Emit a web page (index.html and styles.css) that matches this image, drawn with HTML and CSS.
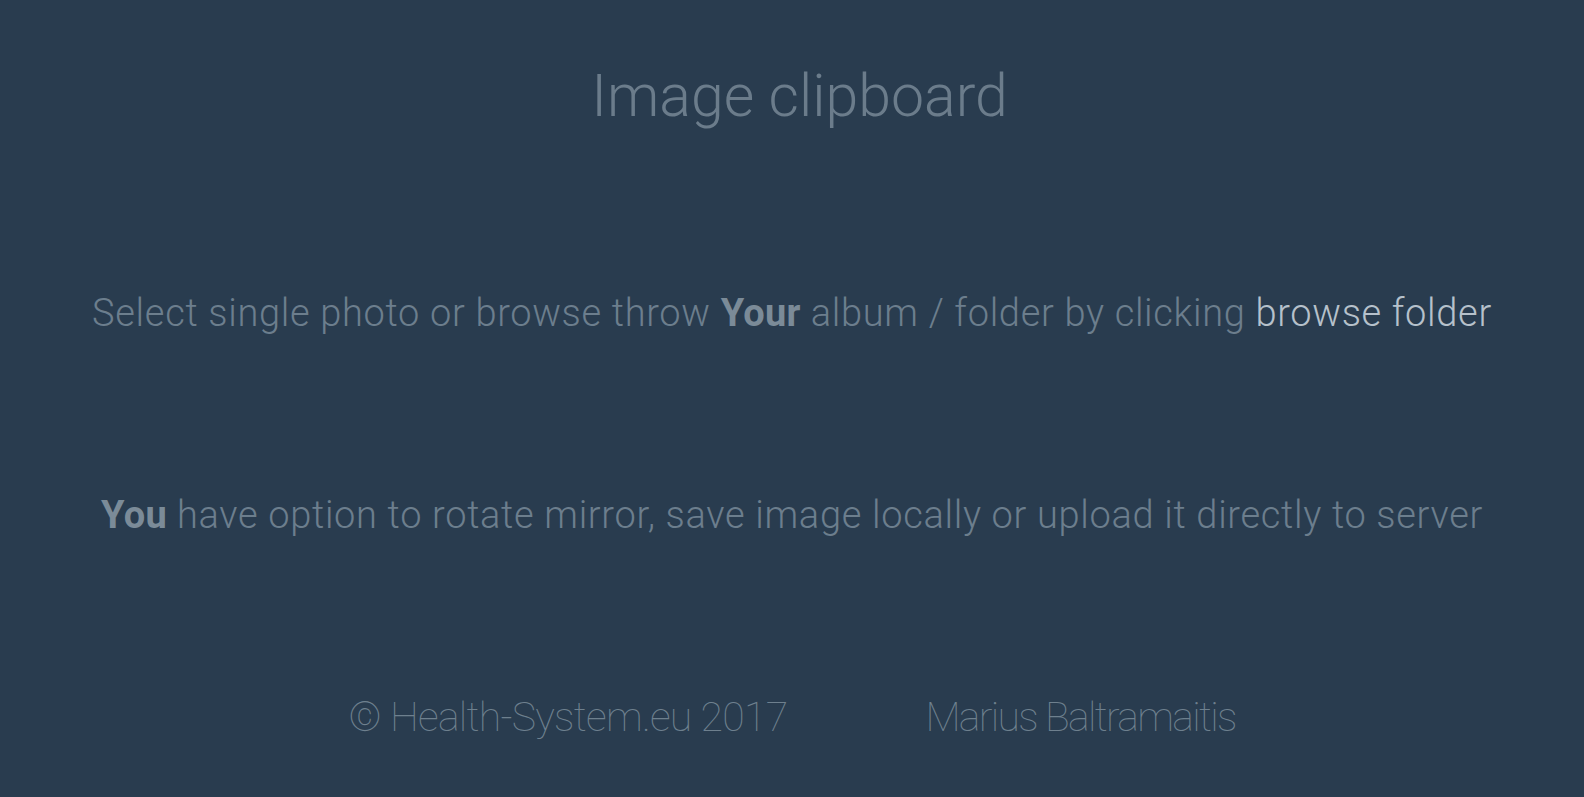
FILE: index.html
```html
<!DOCTYPE html>
<html lang="en">
<head>
<meta charset="utf-8">
<title>Image clipboard</title>
<link rel="stylesheet" href="styles.css">
</head>
<body>
<main class="page">
  <h1 class="title">Image clipboard</h1>
  <p class="line">Select single photo or browse throw <b class="strong">Your</b> album / folder by clicking <a class="link">browse folder</a></p>
  <p class="line"><b class="strong">You</b> have option to rotate mirror, save image locally or upload it directly to server</p>
  <footer class="footer">
    <span class="copy">© Health-System.eu 2017</span>
    <span class="author">Marius Baltramaitis</span>
  </footer>
</main>
</body>
</html>
```

FILE: styles.css
```css
html, body {
  margin: 0;
  padding: 0;
  height: 100%;
}
body {
  background: #293c4f;
  font-family: Roboto, "Liberation Sans", sans-serif;
  font-weight: 300;
  color: #6c7e8d;
}
.page {
  display: flex;
  flex-direction: column;
  align-items: center;
  height: 797px;
}
.title {
  margin: 0;
  margin-top: 56px;
  padding-left: 15px;
  height: 80px;
  line-height: 80px;
  font-size: 59px;
  font-weight: 300;
  color: #6b7c8b;
}
.line {
  margin: 0;
  margin-top: 141px;
  height: 72px;
  line-height: 72px;
  font-size: 38px;
  letter-spacing: 0.68px;
  white-space: nowrap;
}
.line + .line {
  margin-top: 130px;
}
.strong {
  font-weight: 700;
  color: #7b8b98;
  letter-spacing: 0.3px;
}
.link {
  color: #b6c1cb;
  cursor: pointer;
}
.footer {
  margin-top: 130px;
  height: 72px;
  line-height: 72px;
  font-size: 41px;
  font-weight: 100;
  display: flex;
  gap: 138px;
  color: #6e808e;
}
.copy {
  letter-spacing: -0.75px;
}
.author {
  letter-spacing: -1.7px;
}
```
